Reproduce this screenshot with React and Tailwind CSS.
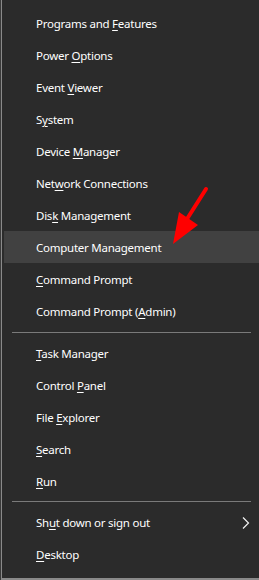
import React from "react"

const groups = [
  [
    ["Programs and ", "F", "eatures"],
    ["Power ", "O", "ptions"],
    ["Event ", "V", "iewer"],
    ["S", "y", "stem"],
    ["Device ", "M", "anager"],
    ["Net", "w", "ork Connections"],
    ["Dis", "k", " Management"],
    ["Computer Management", "", ""],
    ["", "C", "ommand Prompt"],
    ["Command Prompt (", "A", "dmin)"],
  ],
  [
    ["", "T", "ask Manager"],
    ["Control ", "P", "anel"],
    ["File ", "E", "xplorer"],
    ["", "S", "earch"],
    ["", "R", "un"],
  ],
  [
    ["Sh", "u", "t down or sign out"],
    ["", "D", "esktop"],
  ],
]

const MenuItem = ({ parts, active, submenu }) => {
  const [pre, key, post] = parts
  return (
    <div
      className={`flex items-center h-8 pt-px ml-[2px] pl-[32px] pr-[9px] text-white text-[11.5px] tracking-[-0.25px] ${
        active ? "bg-[#414141]" : ""
      }`}
    >
      <span className="flex-1 whitespace-nowrap">
        {pre}
        {key && <span className="underline underline-offset-2">{key}</span>}
        {post}
      </span>
      {submenu && (
        <svg width="8" height="12" viewBox="0 0 8 12">
          <path d="M1 0.5 L6.5 6 L1 11.5" fill="none" stroke="#f2f2f2" strokeWidth="1.2" />
        </svg>
      )}
    </div>
  )
}

const App = () => {
  return (
    <div
      className="relative w-[259px] h-[580px] bg-[#3a3a3a] pl-px overflow-hidden"
      style={{ fontFamily: '"Segoe UI", "Noto Sans", sans-serif' }}
    >
      <div className="h-full border-l border-b-2 border-[#8a8a8a] bg-[#2b2b2b] pt-[7px]">
        {groups.map((group, gi) => (
          <div key={gi}>
            {gi > 0 && (
              <div className={`${gi === 1 ? "pt-[5px]" : "pt-[4px]"} pb-[4px] pl-[10px] pr-[8px]`}>
                <div className="h-px bg-[#7a7a7a]" />
              </div>
            )}
            {group.map((parts, i) => (
              <MenuItem
                key={i}
                parts={parts}
                active={gi === 0 && i === 7}
                submenu={gi === 2 && i === 0}
              />
            ))}
          </div>
        ))}
      </div>

      <svg
        className="absolute left-0 top-0 pointer-events-none"
        width="259"
        height="580"
        viewBox="0 0 259 580"
      >
        <line x1="206" y1="189" x2="187" y2="219" stroke="#ff0000" strokeWidth="4" strokeLinecap="round" />
        <polygon points="179,212 198,225 173,244" fill="#ff0000" />
      </svg>
    </div>
  )
}

export default App
